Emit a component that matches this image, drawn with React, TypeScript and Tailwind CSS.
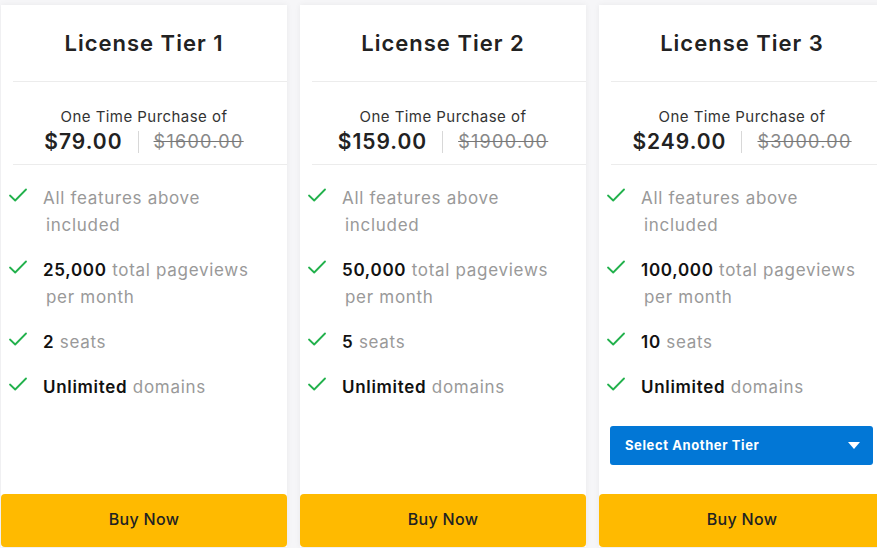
import React from "react";

type Feature = { bold?: string; text: string; second?: string };
type Tier = {
  name: string;
  price: string;
  old: string;
  features: Feature[];
  select?: boolean;
};

const tiers: Tier[] = [
  {
    name: "License Tier 1",
    price: "$79.00",
    old: "$1600.00",
    features: [
      { text: "All features above", second: "included" },
      { bold: "25,000", text: " total pageviews", second: "per month" },
      { bold: "2", text: " seats" },
      { bold: "Unlimited", text: " domains" },
    ],
  },
  {
    name: "License Tier 2",
    price: "$159.00",
    old: "$1900.00",
    features: [
      { text: "All features above", second: "included" },
      { bold: "50,000", text: " total pageviews", second: "per month" },
      { bold: "5", text: " seats" },
      { bold: "Unlimited", text: " domains" },
    ],
  },
  {
    name: "License Tier 3",
    price: "$249.00",
    old: "$3000.00",
    features: [
      { text: "All features above", second: "included" },
      { bold: "100,000", text: " total pageviews", second: "per month" },
      { bold: "10", text: " seats" },
      { bold: "Unlimited", text: " domains" },
    ],
    select: true,
  },
];

function Check() {
  return (
    <svg width="18" height="14" viewBox="0 0 18 14" fill="none" className="shrink-0">
      <path d="M1 7.5 L6.2 12.5 L17 1.5" stroke="#22b14c" strokeWidth="1.8" strokeLinecap="round" strokeLinejoin="round" />
    </svg>
  );
}

function Card({ tier }: { tier: Tier }) {
  return (
    <div className="w-[286px] shrink-0 bg-white shadow-[0_0_6px_rgba(0,0,0,0.06)] flex flex-col h-[542px]">
      <div className="h-[76px] flex items-center justify-center pt-px">
        <h2 className="text-[22px] font-semibold text-[#222] tracking-[1px]">{tier.name}</h2>
      </div>
      <div className="ml-3 border-t border-[#ececec]" />
      <div className="h-[82px] flex flex-col items-center pt-[24px]">
        <div className="text-[15px] text-[#333] leading-[22px] tracking-[0.45px]">One Time Purchase of</div>
        <div className="flex items-center leading-[26px] mt-px">
          <span className="text-[21px] font-semibold text-[#222] tracking-[1px]">{tier.price}</span>
          <span className="mx-[15px] w-px h-[22px] bg-[#d8d8d8]" />
          <span className="text-[18px] text-[#888] line-through decoration-[#777] tracking-[1.3px]">{tier.old}</span>
        </div>
      </div>
      <div className="ml-3 border-t border-[#ececec]" />
      <ul className="flex flex-col gap-[18px] pt-[20px] pl-[8px]">
        {tier.features.map((f, i) => (
          <li key={i} className="flex items-start text-[17px] leading-[27px] text-[#999] tracking-[0.7px]">
            <div className="w-[34px] pt-[3px]">
              <Check />
            </div>
            <div>
              <div>
                {f.bold && <span className="font-semibold text-[#111]">{f.bold}</span>}
                {f.text}
              </div>
              {f.second && <div className="pl-[3px]">{f.second}</div>}
            </div>
          </li>
        ))}
      </ul>
      {tier.select && (
        <div className="mt-[25px] ml-[11px] mr-[12px] h-[39px] rounded-[3px] bg-[#0277d6] flex items-center justify-between pl-[15px] pr-[13px]">
          <span className="text-[13px] font-bold text-white tracking-[0.6px]">Select Another Tier</span>
          <svg width="12" height="7" viewBox="0 0 12 7">
            <path d="M0 0 H12 L6 7 Z" fill="#fff" />
          </svg>
        </div>
      )}
      <button className="mt-auto h-[53px] w-full rounded-[4px] bg-[#ffba00] pb-[3px] text-[16px] font-medium text-[#222] tracking-[0.3px]">
        Buy Now
      </button>
    </div>
  );
}

export default function App() {
  return (
    <div
      className="w-[877px] h-[548px] overflow-hidden bg-[#f6f6f8] pt-[5px] pl-px flex gap-[13px]"
      style={{ fontFamily: 'Inter, Arial, sans-serif' }}
    >
      {tiers.map((t) => (
        <Card key={t.name} tier={t} />
      ))}
    </div>
  );
}
